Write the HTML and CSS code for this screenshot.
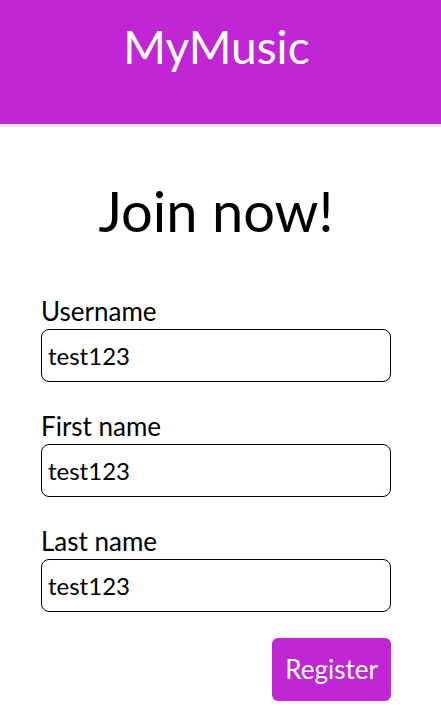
FILE: index.html
```html
<!DOCTYPE html>
<html lang="en">
<head>
<meta charset="utf-8">
<title>MyMusic</title>
<link rel="stylesheet" href="styles.css">
</head>
<body>
<header class="site-header"><span class="brand">MyMusic</span></header>
<main class="page">
<h1 class="title">Join now!</h1>
<form class="form">
<div class="field"><label for="username">Username</label><input id="username" type="text" value="test123"></div>
<div class="field"><label for="first">First name</label><input id="first" type="text" value="test123"></div>
<div class="field"><label for="last">Last name</label><input id="last" type="text" value="test123"></div>
<button class="submit" type="submit">Register</button>
</form>
</main>
</body>
</html>
```
FILE: styles.css
```css
* { box-sizing: border-box; }
body {
  margin: 0;
  background: #fff;
  color: #000;
  font-family: Lato, "Noto Sans", sans-serif;
}
.site-header {
  padding: 15px 8px 45px 0;
  background: #c026d3;
  border-bottom: 3px solid #e5e7eb;
  color: #fff;
  text-align: center;
}
.brand {
  display: block;
  font-size: 46px;
  line-height: 64px;
}
.page { padding: 48px 50px 23px 41px; }
.title {
  margin: 0;
  font-size: 56px;
  font-weight: 400;
  line-height: 72px;
  text-align: center;
}
.form {
  display: flex;
  flex-direction: column;
  gap: 26px;
  margin-top: 46px;
}
.field { display: flex; flex-direction: column; }
.field label {
  font-size: 26px;
  line-height: 36px;
}
.field input {
  width: 100%;
  height: 53px;
  padding: 0 6px;
  border: 1px solid #000;
  border-radius: 8px;
  background: #fff;
  color: #000;
  font: inherit;
  font-size: 24px;
}
.submit {
  align-self: flex-end;
  padding: 12px 13px;
  border: 0;
  border-radius: 6px;
  background: #c026d3;
  color: #fff;
  font: inherit;
  font-size: 26px;
  line-height: 39px;
}
```
